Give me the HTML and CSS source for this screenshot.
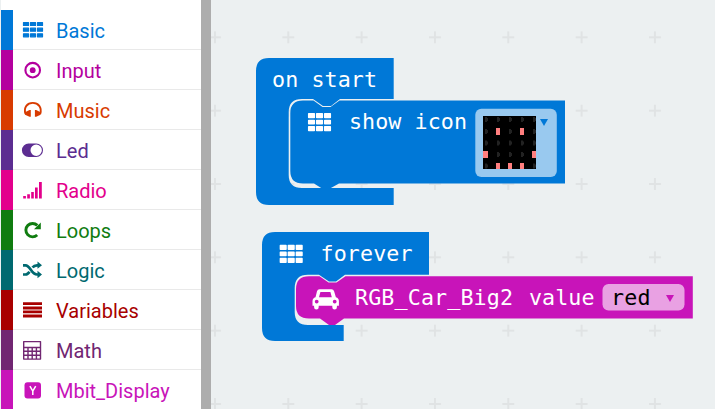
FILE: index.html
```
<!DOCTYPE html>
<html lang="en">
<head>
<meta charset="utf-8">
<title>Block editor</title>
<link rel="stylesheet" href="styles.css">
</head>
<body>
<div class="editor">
  <nav class="toolbox">
    <div class="category basic"><svg class="icon" viewBox="0 0 24 24"><path d="M2.500 4.500h5v3h-5zM9.500 4.500h5v3h-5zM16.500 4.500h5v3h-5zM2.500 10.200h5v3h-5zM9.500 10.200h5v3h-5zM16.500 10.200h5v3h-5zM2.500 15.800h5v3h-5zM9.500 15.800h5v3h-5zM16.500 15.800h5v3h-5z" stroke="currentColor" stroke-width="1.200" stroke-linejoin="round"/></svg><span>Basic</span></div>
    <div class="category input"><svg class="icon" viewBox="0 0 24 24"><circle cx="11.700" cy="12.200" r="7.300" fill="none" stroke="currentColor" stroke-width="2.100"/><circle cx="11.700" cy="12.200" r="2.900"/></svg><span>Input</span></div>
    <div class="category music"><svg class="icon" viewBox="0 0 24 24"><path d="M4.500 16C2.300 9 6.500 4.900 11.800 4.900S21.300 9 19.200 16" fill="none" stroke="currentColor" stroke-width="1.900"/><path d="M4 14.300L8.500 12H9.800v6.800H8.500L4 16.800zM19.600 14.300L15.200 12H13.900v6.800H15.200L19.600 16.800z"/></svg><span>Music</span></div>
    <div class="category led"><svg class="icon" viewBox="0 0 24 24"><path fill-rule="evenodd" d="M7.700 5.500h7.500a6.800 6.800 0 0 1 0 13.600H7.700A6.800 6.800 0 0 1 7.700 5.500zM15.200 6.600a5.700 5.700 0 1 0 0 11.400 5.700 5.700 0 1 0 0-11.400z"/></svg><span>Led</span></div>
    <div class="category radio"><svg class="icon" viewBox="0 0 24 24"><path d="M2.200 18h2.700v2.500H2.200zM6.200 16.200h2.700v4.300H6.200zM10.200 14h2.600v6.500h-2.600zM14 9.500h2.700v11H14zM18 4h2.800v16.500H18z"/></svg><span>Radio</span></div>
    <div class="category loops"><svg class="icon" viewBox="0 0 24 24"><path d="M16.300 7.400A6.700 6.700 0 1 0 16.200 17" fill="none" stroke="currentColor" stroke-width="2.900"/><path d="M19.800 4.500v6.800h-6.800z"/></svg><span>Loops</span></div>
    <div class="category logic"><svg class="icon" viewBox="0 0 24 24"><path d="M2 7.300h2.500c5 0 5.500 9.200 11.500 9.200h1M2 16.500h2.500c1.800 0 3-1.200 4-2.800M11.500 9.600C12.600 8 13.800 7.300 16 7.300h1" fill="none" stroke="currentColor" stroke-width="2.700"/><path d="M16.500 3.500L21 7.300l-4.500 3.500zM16.500 12.800L21 16.500 16.500 20.200z"/></svg><span>Logic</span></div>
    <div class="category variables"><svg class="icon" viewBox="0 0 24 24"><path d="M2 4.200h19v2.900H2zM2 8.500h19v2.900H2zM2 12.400h19v2.900H2zM2 16.500h19v2.900H2z"/></svg><span>Variables</span></div>
    <div class="category math"><svg class="icon" viewBox="0 0 24 24"><path d="M2.700 3.600h16.800v17.500H2.700zM2.700 9.500h16.800M2.700 13.300h16.800M2.700 17.200h16.800M7 9.500v11.500M11.200 9.500v11.500M15.400 9.500v11.500" fill="none" stroke="currentColor" stroke-width="1.400" stroke-linejoin="round"/></svg><span>Math</span></div>
    <div class="category display"><svg class="icon" viewBox="0 0 24 24"><rect x="3.500" y="4.200" width="16.500" height="16.300" rx="3"/><path d="M8.900 8.200l2.900 4.900 2.900-4.900M11.800 13v4" fill="none" stroke="#fff" stroke-width="1.500"/></svg><span>Mbit_Display</span></div>
  </nav>
  <div class="divider"></div>
  <main class="workspace">
    <svg class="canvas" viewBox="211 0 504 409">
      <defs>
        <pattern id="grid" x="178.300" y="0.670" width="73.330" height="73.330" patternUnits="userSpaceOnUse">
          <path class="cross" d="M30.700 36.700h12M36.700 30.700v12"/>
        </pattern>
        <path id="tiles" d="M1 1h5.600v3.800H1zM9 1h5.600v3.800H9zM17 1h5.600v3.800H17zM1 7.700h5.600v3.300H1zM9 7.700h5.600v3.300H9zM17 7.700h5.600v3.300H17zM1 14h5.600v3.800H1zM9 14h5.600v3.800H9zM17 14h5.600v3.800H17z" stroke="#fff" stroke-linejoin="round" stroke-width="1.500"/>
        <path id="dim" d="M1 0h2v1h1v3H3v1H1z"/>
        <g id="dimrow"><use href="#dim" x="484"/><use href="#dim" x="496"/><use href="#dim" x="508"/><use href="#dim" x="520"/><use href="#dim" x="532"/></g>
      </defs>
      <rect x="211" width="504" height="409" fill="url(#grid)"/>

      <g class="block">
        <path class="blue" fill-rule="evenodd" d="M269 58H393.700V99H340L331 106H323L313 99H302Q288.700 99 288.700 112V175Q288.700 188 302 188H393.700V205H269Q256 205 256 192V71Q256 58 269 58z"/>
        <path class="blue" d="M303 100.500H313.500L322.500 107H330.500L339.500 100.500H565V183.500H339L330 188.500H322L314 183.500H303Q290.300 183.500 290.300 171V113Q290.300 100.500 303 100.500z"/>
        <text x="272" y="87" textLength="105">on start</text>
        <use href="#tiles" x="307.700" y="112.800" class="white"/>
        <text x="349" y="129" textLength="118">show icon</text>
        <rect class="picker" x="475.300" y="108.700" width="81.500" height="68.300" rx="6"/>
        <rect x="483" y="116" width="53" height="53"/>
        <g class="dim"><use href="#dimrow" y="117"/><use href="#dimrow" y="129"/><use href="#dimrow" y="140.500"/><use href="#dimrow" y="152"/><use href="#dimrow" y="163.500"/></g>
        <path class="lit" d="M496 128h4v7h-4zM520 128h4v7h-4zM483 151h5v7h-5zM532 151h4v7h-4zM496 163h4v6h-4zM508 163h4v6h-4zM520 163h4v6h-4z"/>
        <path class="blue" d="M540 119h8l-4 7z"/>
      </g>

      <g class="block">
        <path class="blue" d="M275 232H429V274.700H345L336 281.500H329L319 274.700H308Q294.700 274.700 294.700 288V312Q294.700 325 308 325H343.700V341H275Q262 341 262 328V245Q262 232 275 232z"/>
        <path class="magenta" d="M309 276.200H319.500L328.500 282.500H336.500L345.500 276.200H692.800V318.500H344L335 325H329L320 318.500H309Q296 318.500 296 306V289Q296 276.200 309 276.200z"/>
        <use href="#tiles" x="279.400" y="244.500" class="white"/>
        <text x="320.500" y="261" textLength="92">forever</text>
        <path class="white" fill-rule="evenodd" d="M319.500 289.200h12q2 0 2.600 2l1.800 6q3 .8 3 4v4.500h-2v1.500a2.300 2.300 0 0 1-4.600 0V305.800h-13.600v1.400a2.300 2.300 0 0 1-4.600 0V305.800h-1.600v-4.500q0-3.200 3-4l1.500-6q.6-2 2.500-2zM320.400 292l-1.400 5.200h12.800L330.400 292zM316.700 299.700a1.900 1.900 0 1 0 0 3.800 1.900 1.900 0 1 0 0-3.800zM334.700 299.700a1.900 1.900 0 1 0 0 3.800 1.900 1.900 0 1 0 0-3.800z"/>
        <text x="355" y="305" textLength="158">RGB_Car_Big2</text>
        <text x="529" y="305" textLength="65.500">value</text>
        <rect class="field" x="602.500" y="284" width="82" height="26.500" rx="6"/>
        <text class="value" x="611" y="305" textLength="39.500">red</text>
        <path class="magenta" d="M666 295h8l-4 7z"/>
      </g>
    </svg>
  </main>
</div>
</body>
</html>
```
FILE: styles.css
```
body { margin: 0; background: #ecf0f1; }
.editor { display: flex; width: 715px; height: 409px; overflow: hidden; }
.toolbox { width: 200px; padding-top: 10px; margin-left: 1px; box-sizing: border-box; background: #fff; flex: none; }
.category { display: flex; align-items: center; height: 40px; box-sizing: border-box; color: var(--c); font: 20px/39px Roboto, sans-serif;
  background: linear-gradient(var(--c), var(--c)) 0 0 / 12px 40px no-repeat, linear-gradient(#e9e9e9, #e9e9e9) 0 39px / 200px 1px no-repeat; }
.category span { padding-top: 2px; }
.icon { width: 24px; height: 24px; margin: 0 11px 0 20px; fill: currentColor; flex: none; overflow: visible; }
.basic { --c: #0078d7; }
.input { --c: #b4009e; }
.music { --c: #d83b01; }
.led { --c: #5c2d91; }
.radio { --c: #e3008c; }
.loops { --c: #107c10; }
.logic { --c: #006970; }
.variables { --c: #a80000; }
.math { --c: #712672; }
.display { --c: #c814b9; }
.divider { width: 10px; background: #adadad; flex: none; }
.workspace { flex: 1; background: #ecf0f1; }
.canvas { display: block; width: 504px; height: 409px; }
.cross { stroke: #e0e3e4; stroke-width: 2; fill: none; }
.blue { fill: #0078d7; }
.magenta { fill: #c814b9; }
.white { fill: #fff; }
.picker { fill: #99c9ef; }
.field { fill: #e9a1e3; }
.dim { fill: #222; }
.lit { fill: #ff7f7f; }
.block text { font: 21.700px "DejaVu Sans Mono", monospace; fill: #fff; white-space: pre; }
.block .value { fill: #000; }
```
